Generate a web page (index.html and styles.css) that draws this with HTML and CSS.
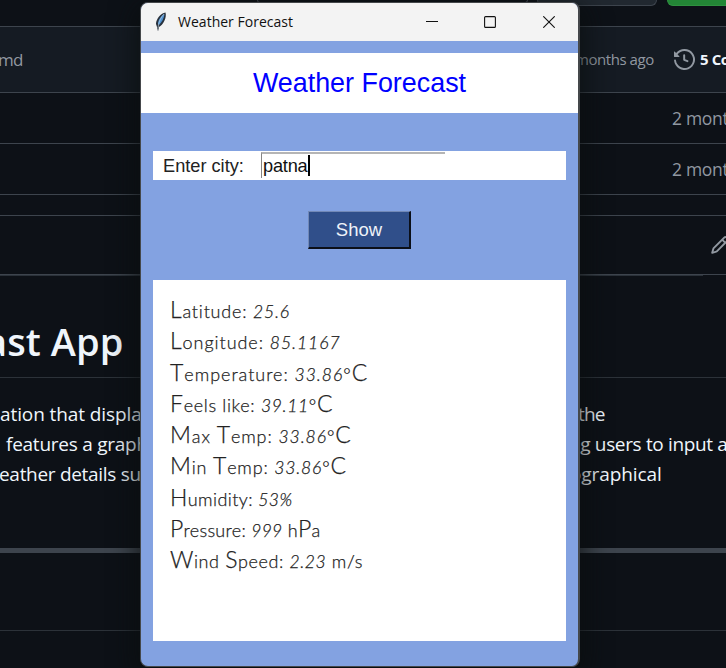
FILE: index.html
```html
<!DOCTYPE html>
<html lang="en">
<head>
<meta charset="utf-8">
<title>Weather Forecast</title>
<link rel="stylesheet" href="styles.css">
</head>
<body>
<div class="repo">
  <div class="toolbar"><span class="search"></span><span class="tool"></span><span class="code"></span></div>
  <div class="commit">
    <span class="file">md</span>
    <span class="ago">months ago</span>
    <svg class="history" viewBox="0 0 16 16" fill="currentColor"><path d="m.427 1.927 1.215 1.215a8.002 8.002 0 1 1-1.6 5.685.75.75 0 1 1 1.493-.154 6.5 6.5 0 1 0 1.18-4.458l1.358 1.358A.25.25 0 0 1 3.896 6H.25A.25.25 0 0 1 0 5.75V2.104a.25.25 0 0 1 .427-.177ZM7.75 4a.75.75 0 0 1 .75.75v2.992l2.028.812a.75.75 0 0 1-.557 1.392l-2.5-1A.751.751 0 0 1 7 8.25v-3.5A.75.75 0 0 1 7.75 4Z"/></svg>
    <b>5 Co</b>
  </div>
  <div class="row"><span>2 mont</span></div>
  <div class="row"><span>2 mont</span></div>
  <div class="gap"></div>
  <div class="readme-bar">
    <svg class="pencil" viewBox="0 0 16 16" fill="currentColor"><path d="M11.013 1.427a1.75 1.75 0 0 1 2.474 0l1.086 1.086a1.75 1.75 0 0 1 0 2.474l-8.61 8.61c-.21.21-.47.364-.756.445l-3.251.93a.75.75 0 0 1-.927-.928l.929-3.25c.081-.286.235-.547.445-.758l8.61-8.61Zm.176 4.823L9.75 4.81l-6.286 6.287a.253.253 0 0 0-.064.108l-.558 1.953 1.953-.558a.253.253 0 0 0 .108-.064Zm1.238-3.763a.25.25 0 0 0-.354 0L10.811 3.75l1.439 1.44 1.263-1.263a.25.25 0 0 0 0-.354Z"/></svg>
  </div>
  <div class="underline"></div>
  <div class="heading"><h1>ast App</h1></div>
  <div class="prose">
    <p><span class="l1">ation that displa</span><span class="r1">the</span></p>
    <p><span class="l2">features a graph</span><span class="r2">ng users to input a</span></p>
    <p><span class="l3">eather details suc</span><span class="r3">ographical</span></p>
  </div>
  <div class="bar"></div>
  <div class="below"></div>
</div>

<main class="window">
  <header class="title">
    <svg class="feather" viewBox="0 0 12 20"><path d="M10.500.5C6 1 1 7 1 12l1 3 1 4.500 1-4.500c4-2 8-9 6.500-14.500Z" fill="#29323e"/><path d="M9.500 2C6 4 3 8 3 12l1 1c3-3 5-7 5.500-11Z" fill="#4f92d2"/><path d="M9 2C6 5 3.500 10 3 16" fill="none" stroke="#c9d8e3" stroke-width=".6"/></svg>
    <span class="name">Weather Forecast</span>
    <svg class="min" viewBox="0 0 12 12"><path d="M0 5.500h12"/></svg>
    <svg class="max" viewBox="0 0 12 12"><rect x=".6" y=".6" width="10.800" height="10.800" rx="1"/></svg>
    <svg class="close" viewBox="0 0 12 12"><path d="M.3.3l11.400 11.400M11.700.3L.3 11.700"/></svg>
  </header>
  <div class="banner">Weather Forecast</div>
  <div class="entry"><label>Enter city:</label><div class="field"><span>patna</span><i></i></div></div>
  <button class="show">Show</button>
  <div class="results">
    <div class="k1"><em>L</em>atitude: <s>25.6</s></div>
    <div class="k2"><em>L</em>ongitude: <s>85.1167</s></div>
    <div class="k3"><em>T</em>emperature: <s>33.86</s>°<em>C</em></div>
    <div class="k4"><em>F</em>eels like: <s>39.11</s>°<em>C</em></div>
    <div class="k5"><em>M</em>ax <em>T</em>emp: <s>33.86</s>°<em>C</em></div>
    <div class="k6"><em>M</em>in <em>T</em>emp: <s>33.86</s>°<em>C</em></div>
    <div class="k7"><em>H</em>umidity: <s>53%</s></div>
    <div class="k8"><em>P</em>ressure: <s>999</s> h<em>P</em>a</div>
    <div class="k9"><em>W</em>ind <em>S</em>peed: <s>2.23</s> m/s</div>
  </div>
</main>
</body>
</html>
```

FILE: styles.css
```css
* { box-sizing: border-box; }
body {
  margin: 0;
  width: 726px;
  height: 668px;
  overflow: hidden;
  position: relative;
  background: #0d1117;
  color: #f0f6fc;
  font-family: "Open Sans", "Noto Sans", sans-serif;
}
svg { display: block; flex: none; }
.repo { width: 726px; height: 668px; overflow: hidden; white-space: nowrap; }
.repo span, .repo b { flex: none; }

.toolbar { display: flex; align-items: flex-start; height: 26px; padding-left: 257px; }
.search { width: 271px; height: 3px; border: 1px solid #3d444d; border-top: 0; border-radius: 0 0 5px 5px; }
.tool { width: 120px; height: 6px; margin-left: 9px; background: #212830; border: 1px solid #3d444d; border-top: 0; border-radius: 0 0 6px 6px; }
.code { width: 80px; height: 6px; margin-left: 10px; background: #238636; border: 1px solid #2f9140; border-top: 0; border-radius: 0 0 6px 6px; }

.commit {
  display: flex;
  align-items: center;
  height: 67px;
  padding-bottom: 1px;
  background: #151b23;
  border-top: 1px solid #3d444d;
  border-bottom: 1px solid #3d444d;
  color: #9198a1;
}
.file { width: 577px; margin-left: -2px; font-size: 17px; letter-spacing: -.7px; }
.ago { width: 99px; font-size: 15px; letter-spacing: -.45px; }
.history { width: 21px; height: 21px; }
.commit b { margin-left: 5px; color: #f0f6fc; font-size: 15px; letter-spacing: -.4px; }
.row { display: flex; align-items: center; height: 51px; padding: 0 0 1px 672px; border-bottom: 1px solid #3d444d; color: #9198a1; font-size: 17.500px; letter-spacing: -.3px; }
.gap { height: 20px; }
.readme-bar { display: flex; align-items: center; height: 60px; padding-left: 710px; border-top: 1px solid #3d444d; border-bottom: 1px solid #3d444d; color: #9198a1; }
.pencil { width: 20px; height: 20px; }
.underline { width: 703px; height: 1px; background: #2b323a; }
.heading { display: flex; align-items: center; height: 102px; padding-top: 28px; border-bottom: 1px solid #2c3239; }
h1 { margin: 0 0 0 -15px; font-size: 38px; font-weight: 600; line-height: 50px; letter-spacing: .1px; }
.prose { height: 170px; padding-top: 21px; font-size: 19px; line-height: 30px; }
.prose p { display: flex; margin: 0; }
.l1 { width: 578px; letter-spacing: -.1px; }
.r1 { letter-spacing: -.8px; }
.l2 { width: 569px; padding-left: 6px; letter-spacing: -.25px; }
.l3 { width: 571px; margin-left: -1px; letter-spacing: -.3px; }
.r2 { letter-spacing: -.35px; }
.r3 { letter-spacing: -.1px; }
.bar { height: 5px; background: #3d444d; }
.below { height: 78px; border-bottom: 1px solid #2c3239; }

.window {
  position: absolute;
  left: 140px;
  top: 2px;
  width: 440px;
  height: 665px;
  overflow: hidden;
  border: 1px solid #45484b;
  border-right-width: 2px;
  border-radius: 8px;
  background: #83a2e1;
  box-shadow: 0 8px 26px 5px rgba(10, 13, 13, .75);
  font-family: "Liberation Sans", Arial, sans-serif;
  color: #222;
}
.title { display: flex; align-items: center; height: 38px; padding: 0 0 1px 14px; background: #f3f3f3; color: #111; }
.title svg { fill: none; stroke: #111; stroke-width: 1.1; width: 12px; height: 12px; }
.title .feather { width: 12px; height: 20px; stroke: none; margin-right: 11px; }
.name { width: 248px; font-family: "Open Sans", sans-serif; font-size: 14px; letter-spacing: .02px; white-space: nowrap; }
.title .max { margin-left: 46px; }
.title .close { margin-left: 47px; }
.banner { height: 60px; margin-top: 12px; background: #fff; color: #00f; font-size: 26.900px; line-height: 61px; text-align: center; }
.entry { display: flex; width: 413px; height: 29px; margin: 38px 0 0 12px; padding: 1px 0 0 10px; background: #fff; font-size: 18.200px; line-height: 28px; }
.entry label { width: 98px; }
.field { display: flex; width: 184px; height: 26px; padding-left: 1px; border-top: 2px solid #b5b5b5; border-left: 1px solid #858585; line-height: 24px; color: #111; }
.field span { letter-spacing: -.2px; }
.field i { width: 2px; height: 21px; margin-top: 1px; background: #000; }
.show { display: block; width: 103px; height: 38px; margin: 31px 0 0 167px; padding: 0; border: 2px solid; border-color: #7289b7 #0b0f18 #0b0f18 #7289b7; border-top-width: 1px; border-left-width: 1px; background: #304f8a; color: #eef2f8; font: 18.500px "Liberation Sans", Arial, sans-serif; }
.results { width: 413px; height: 361px; margin: 31px 0 0 12px; padding: 16px 0 0 17px; background: #fff; font-family: Lato, sans-serif; font-size: 18px; font-weight: 300; color: #222; -webkit-text-stroke: .25px #222; white-space: nowrap; }
.results div { height: 31.300px; line-height: 31.300px; }
.results em { font-size: 23px; font-style: normal; line-height: 1; }
.results s { text-decoration: none; font-size: 17.500px; font-style: italic; }
.k1 { letter-spacing: .8px; }
.k2 { letter-spacing: .95px; }
.k3 { letter-spacing: .98px; }
.k4 { letter-spacing: .67px; }
.k5 { letter-spacing: .92px; }
.k6 { letter-spacing: .82px; }
.k7 { letter-spacing: .42px; }
.k8 { letter-spacing: .3px; }
.k9 { letter-spacing: .6px; }
```
